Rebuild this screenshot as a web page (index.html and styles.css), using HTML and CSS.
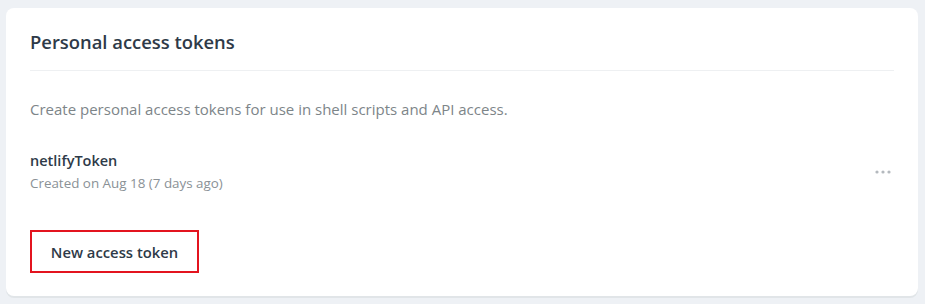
FILE: index.html
```html
<!DOCTYPE html>
<html>
<head>
<meta charset="utf-8">
<link rel="stylesheet" href="styles.css">
</head>
<body>
<section class="card">
  <h2 class="card-title">Personal access tokens</h2>
  <p class="card-desc">Create personal access tokens for use in shell scripts and API access.</p>
  <div class="token-row">
    <div class="token-info">
      <div class="token-name">netlifyToken</div>
      <div class="token-meta">Created on Aug 18 (7 days ago)</div>
    </div>
    <button class="more-btn" aria-label="More options">
      <svg width="16" height="4" viewBox="0 0 16 4"><circle cx="2" cy="2" r="1.6"/><circle cx="8" cy="2" r="1.6"/><circle cx="14" cy="2" r="1.6"/></svg>
    </button>
  </div>
  <button class="new-btn">New access token</button>
</section>
</body>
</html>
```
FILE: styles.css
```css
html, body {
  margin: 0;
  padding: 0;
}
body {
  background: #eef1f5;
  font-family: "Open Sans", "Noto Sans", sans-serif;
  padding: 8px 7px 8px 6px;
  height: 304px;
  box-sizing: border-box;
}
.card {
  background: #ffffff;
  border-radius: 8px;
  box-shadow: 0 2px 0 #e1e5e8;
  padding: 0 24px 0 24px;
  height: 288px;
  box-sizing: border-box;
  display: flex;
  flex-direction: column;
  align-items: flex-start;
}
.card-title {
  margin: 0;
  width: 100%;
  font-size: 18.4px;
  font-weight: 600;
  color: #2e3a48;
  padding: 24px 0 18px;
  line-height: 20px;
  border-bottom: 1px solid #eef0f2;
}
.card-desc {
  margin: 28px 0 0;
  font-size: 15px;
  color: #7d8589;
  line-height: 20px;
}
.token-row {
  width: 100%;
  display: flex;
  align-items: center;
  justify-content: space-between;
  margin-top: 32px;
}
.token-name {
  font-size: 14.5px;
  font-weight: 600;
  color: #2e3a48;
  line-height: 20px;
}
.token-meta {
  margin-top: 4px;
  font-size: 13.4px;
  color: #8a9196;
  line-height: 17px;
}
.more-btn {
  border: 0;
  background: none;
  padding: 4px;
  margin-right: -1px;
  display: flex;
  fill: #b4b9be;
}
.new-btn {
  margin-top: 38px;
  height: 43px;
  width: 169px;
  padding: 0;
  border: 2px solid #e3141f;
  background: #fff;
  font-family: inherit;
  font-size: 14.8px;
  font-weight: 600;
  color: #2e3a48;
  cursor: pointer;
}
```
